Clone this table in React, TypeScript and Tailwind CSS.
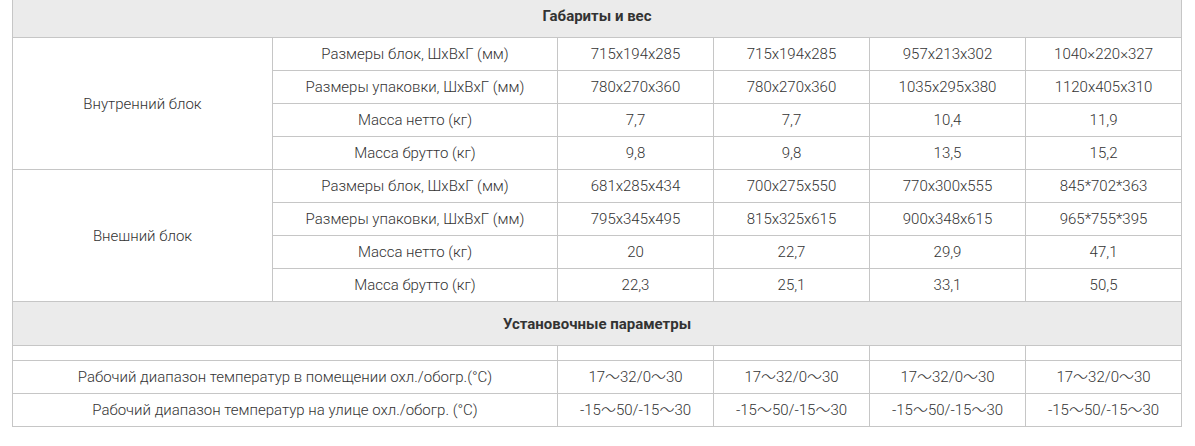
const cols = [260, 285, 156, 156, 156, 156];

const indoor = [
  ["Размеры блок, ШхВхГ (мм)", "715x194x285", "715x194x285", "957x213x302", "1040×220×327"],
  ["Размеры упаковки, ШхВхГ (мм)", "780x270x360", "780x270x360", "1035x295x380", "1120x405x310"],
  ["Масса нетто (кг)", "7,7", "7,7", "10,4", "11,9"],
  ["Масса брутто (кг)", "9,8", "9,8", "13,5", "15,2"],
];

const outdoor = [
  ["Размеры блок, ШхВхГ (мм)", "681x285x434", "700x275x550", "770x300x555", "845*702*363"],
  ["Размеры упаковки, ШхВхГ (мм)", "795x345x495", "815x325x615", "900x348x615", "965*755*395"],
  ["Масса нетто (кг)", "20", "22,7", "29,9", "47,1"],
  ["Масса брутто (кг)", "22,3", "25,1", "33,1", "50,5"],
];

const temps = [
  ["Рабочий диапазон температур в помещении охл./обогр.(°C)", "17～32/0～30", "17～32/0～30", "17～32/0～30", "17～32/0～30"],
  ["Рабочий диапазон температур на улице охл./обогр. (°C)", "-15～50/-15～30", "-15～50/-15～30", "-15～50/-15～30", "-15～50/-15～30"],
];

const cell = "border border-[#c6c6c6] text-center align-middle px-2 p-0 h-[33px]";

function Group({ title, rows }: { title: string; rows: string[][] }) {
  return (
    <>
      {rows.map((r, i) => (
        <tr key={i}>
          {i === 0 && (
            <td rowSpan={rows.length} className={cell}>
              {title}
            </td>
          )}
          {r.map((v, j) => (
            <td key={j} className={cell}>
              {v}
            </td>
          ))}
        </tr>
      ))}
    </>
  );
}

function Section({ title }: { title: string }) {
  return (
    <tr>
      <td
        colSpan={6}
        className="border border-[#c6c6c6] bg-[#ebebeb] h-[44px] text-center align-middle font-bold text-[15px] text-[#333]"
      >
        {title}
      </td>
    </tr>
  );
}

export default function App() {
  return (
    <div className="bg-white w-[1195px] h-[446px] overflow-hidden px-3">
      <table
        className="-mt-[7px] w-[1170px] table-fixed border-collapse text-[15px] font-light text-[#333] leading-5"
        style={{ fontFamily: "Roboto, 'Noto Sans CJK SC', sans-serif" }}
      >
        <colgroup>
          {cols.map((w, i) => (
            <col key={i} style={{ width: w }} />
          ))}
        </colgroup>
        <tbody>
          <Section title="Габариты и вес" />
          <Group title="Внутренний блок" rows={indoor} />
          <Group title="Внешний блок" rows={outdoor} />
          <Section title="Установочные параметры" />
          <tr>
            <td colSpan={2} className="border border-[#c6c6c6] h-[15px] p-0"></td>
            <td className="border border-[#c6c6c6] h-[15px] p-0"></td>
            <td className="border border-[#c6c6c6] h-[15px] p-0"></td>
            <td className="border border-[#c6c6c6] h-[15px] p-0"></td>
            <td className="border border-[#c6c6c6] h-[15px] p-0"></td>
          </tr>
          {temps.map((r, i) => (
            <tr key={i}>
              <td colSpan={2} className={cell}>
                {r[0]}
              </td>
              {r.slice(1).map((v, j) => (
                <td key={j} className={cell}>
                  {v}
                </td>
              ))}
            </tr>
          ))}
        </tbody>
      </table>
    </div>
  );
}
